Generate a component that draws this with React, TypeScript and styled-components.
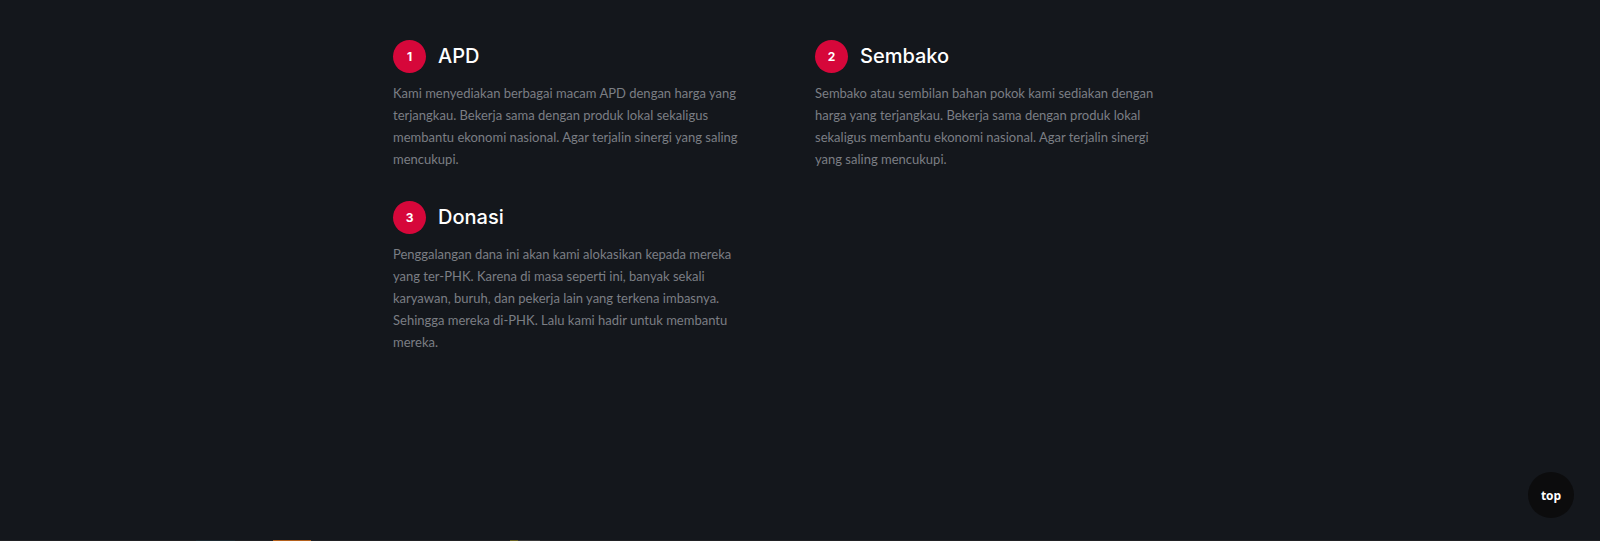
import React from 'react';
import styled, { createGlobalStyle } from 'styled-components';

const GlobalStyle = createGlobalStyle`
  html, body {
    margin: 0;
    padding: 0;
    background: #14171c;
  }
`;

interface Service {
  no: number;
  title: string;
  text: string;
}

const services: Service[] = [
  {
    no: 1,
    title: 'APD',
    text: 'Kami menyediakan berbagai macam APD dengan harga yang terjangkau. Bekerja sama dengan produk lokal sekaligus membantu ekonomi nasional. Agar terjalin sinergi yang saling mencukupi.',
  },
  {
    no: 2,
    title: 'Sembako',
    text: 'Sembako atau sembilan bahan pokok kami sediakan dengan harga yang terjangkau. Bekerja sama dengan produk lokal sekaligus membantu ekonomi nasional. Agar terjalin sinergi yang saling mencukupi.',
  },
  {
    no: 3,
    title: 'Donasi',
    text: 'Penggalangan dana ini akan kami alokasikan kepada mereka yang ter-PHK. Karena di masa seperti ini, banyak sekali karyawan, buruh, dan pekerja lain yang terkena imbasnya. Sehingga mereka di-PHK. Lalu kami hadir untuk membantu mereka.',
  },
];

const Section = styled.section`
  box-sizing: border-box;
  height: 540px;
  padding-top: 40px;
  background: #14171c;
`;

const Container = styled.div`
  width: 844px;
  margin: 0 auto;
  display: grid;
  grid-template-columns: 1fr 1fr;
  row-gap: 31px;
  align-items: start;
`;

const Item = styled.div`
  padding: 0 15px;
`;

const Head = styled.div`
  display: flex;
  align-items: center;
  gap: 12px;
`;

const Number = styled.span`
  display: flex;
  align-items: center;
  justify-content: center;
  width: 33px;
  height: 33px;
  border-radius: 50%;
  background: #d6073a;
  color: #fff;
  font-family: Inter, 'Noto Sans', sans-serif;
  font-weight: 700;
  font-size: 12px;
`;

const Title = styled.h3`
  margin: 0;
  color: #fff;
  font-family: Inter, 'Open Sans', sans-serif;
  font-weight: 500;
  font-size: 20px;
  line-height: 33px;
`;

const Text = styled.p`
  margin: 9px 0 0;
  max-width: 356px;
  color: #7b7e84;
  font-family: Lato, 'Noto Sans', sans-serif;
  font-size: 13px;
  line-height: 22px;
`;

const NextSection = styled.div`
  display: flex;
  height: 1px;
  background: #202124;
`;

const Peek = styled.span<{ $w: number; $c: string; $ml: number }>`
  width: ${p => p.$w}px;
  margin-left: ${p => p.$ml}px;
  background: ${p => p.$c};
`;

const TopButton = styled.a`
  position: fixed;
  right: 26px;
  bottom: 23px;
  width: 46px;
  height: 46px;
  border-radius: 50%;
  background: #0c0c0d;
  color: #fff;
  display: flex;
  align-items: center;
  justify-content: center;
  font-family: 'Open Sans', sans-serif;
  font-weight: 700;
  font-size: 12px;
  text-decoration: none;
`;

export default function App(): React.ReactElement {
  return (
    <>
      <GlobalStyle />
      <Section>
        <Container>
          {services.map(s => (
            <Item key={s.no}>
              <Head>
                <Number>{s.no}</Number>
                <Title>{s.title}</Title>
              </Head>
              <Text>{s.text}</Text>
            </Item>
          ))}
        </Container>
      </Section>
      <NextSection>
        <Peek $ml={196} $w={39} $c='#1e2a31' />
        <Peek $ml={38} $w={38} $c='#b5611d' />
        <Peek $ml={199} $w={8} $c='#6a6422' />
        <Peek $ml={0} $w={22} $c='#3a3a3b' />
      </NextSection>
      <TopButton href='#'>top</TopButton>
    </>
  );
}
